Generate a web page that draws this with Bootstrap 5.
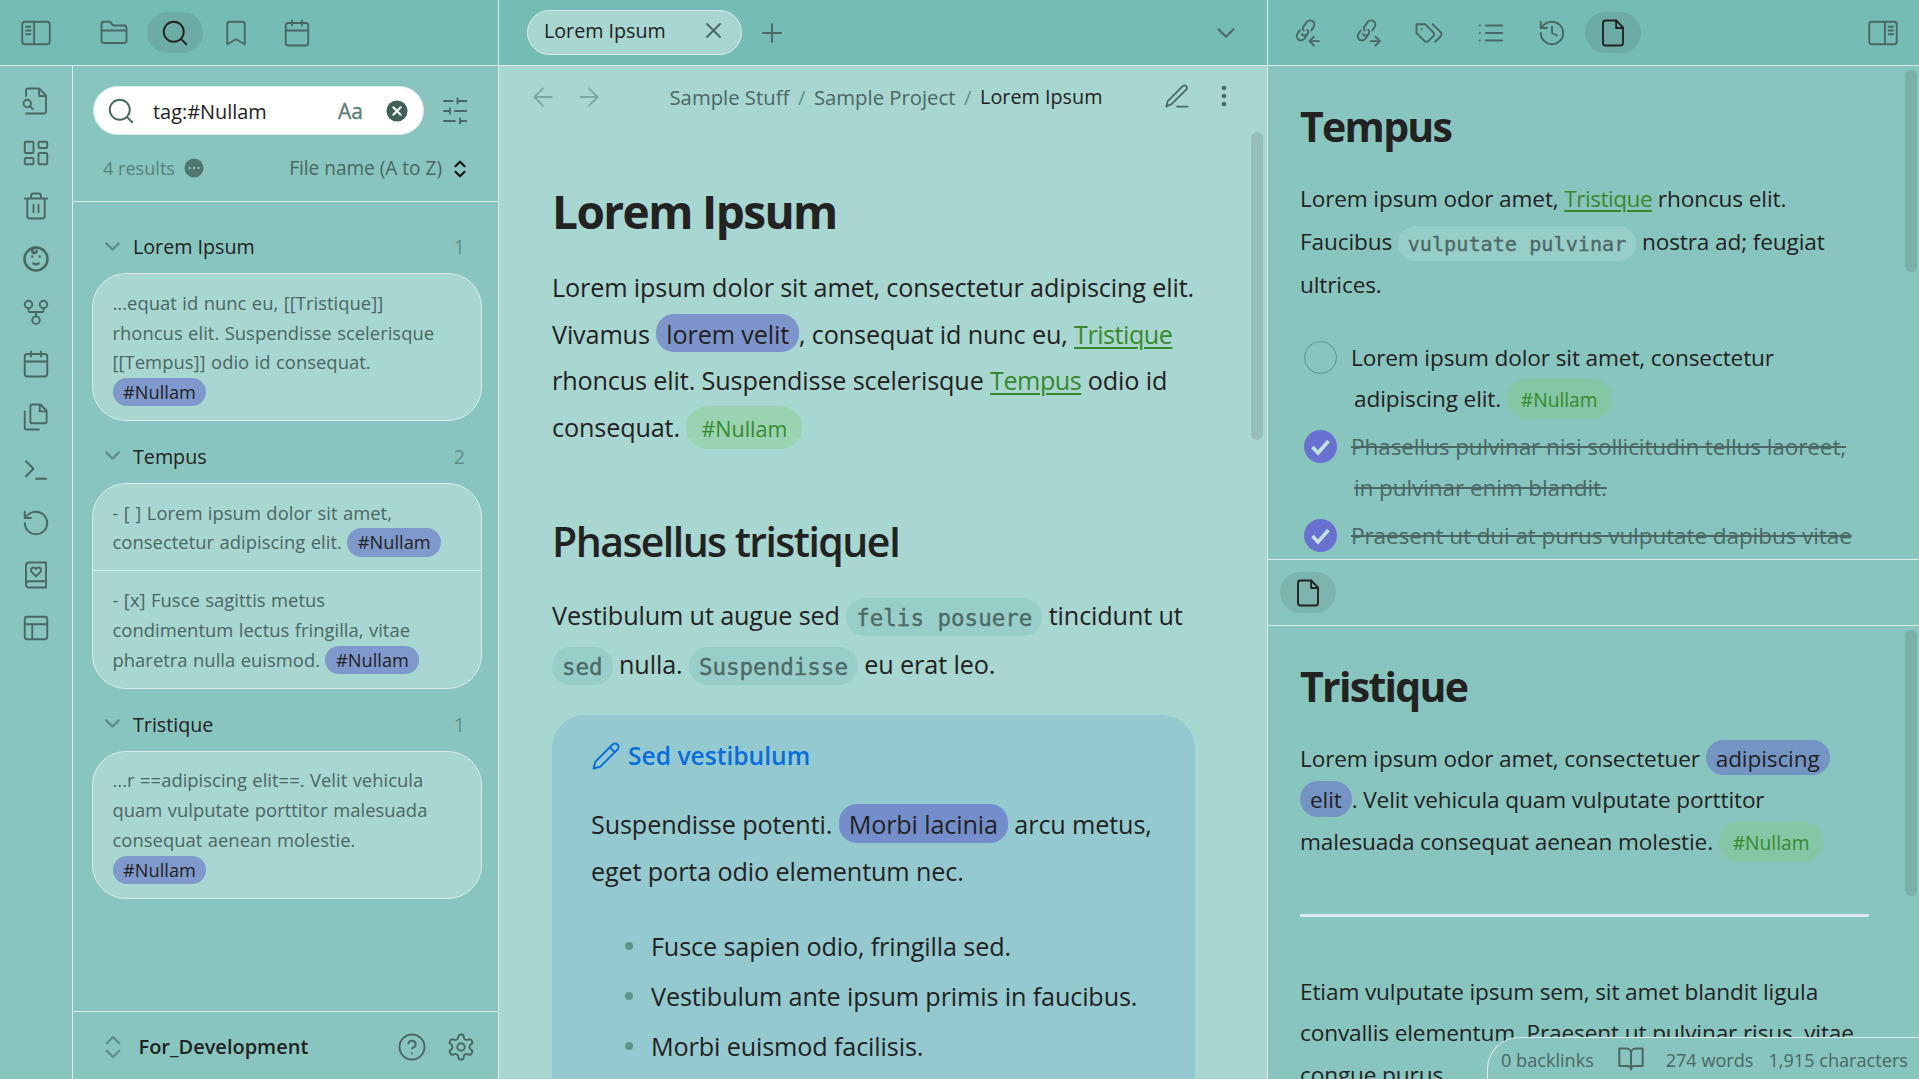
<!DOCTYPE html>
<html lang="en">
<head>
<meta charset="utf-8">
<meta name="viewport" content="width=device-width, initial-scale=1">
<title>Lorem Ipsum</title>
<link href="https://cdn.jsdelivr.net/npm/bootstrap@5.3.0/dist/css/bootstrap.min.css" rel="stylesheet">
<style>
:root{--bar:#75bcb4;--side:#88c5be;--page:#a8d6d0;--rule:#dcebe9;--ink:#222;--muted:#4a6763;--faint:#5f8f89;--link:#38892c}
body{font-family:"Open Sans","Noto Sans",sans-serif;color:var(--ink);background:var(--side);font-size:19.7px;white-space:nowrap}
svg{display:block;flex:none;fill:none;stroke:currentColor;stroke-width:1.5;stroke-linecap:round;stroke-linejoin:round;width:30px;height:30px}
.muted{color:var(--muted)}
.faint{color:var(--faint)}
.ink{color:var(--ink)}
.topbar{height:66px;background:var(--bar);border-bottom:1px solid var(--rule)}
.left-col{width:499px;border-right:1px solid var(--rule)}
.mid-col{width:769px;border-right:1px solid var(--rule);background:var(--page)}
.ribbon{width:73px;border-right:1px solid var(--rule);gap:22.75px;padding-top:19.5px}
.toggle-slot{width:86px;padding-left:21px}
.tab-btn{width:56px;height:41px;border-radius:20.5px;color:var(--muted)}
.tab-btn.on{background:rgba(70,95,90,.16);color:var(--ink)}
/* search panel */
.search-head{height:136px;border-bottom:1px solid var(--rule);padding:20px 31px 0 20px}
.search-box{width:331px;height:49px;border-radius:25px;border:1px solid #d9ebe9;background:#fff;padding-left:12px;padding-right:15px}
.res-row{padding:17px 0 0 10px;height:50px;font-size:18.1px;margin-right:-4px}
.sort{font-size:19.05px}
.group-head{height:62px;padding:18px 33px 8px 32px}
.fold{width:25px;height:25px;margin:-2px 0 0 -5px;stroke-width:2.2}
.hit-card{margin:0 16.5px 0 18.5px;background:var(--page);border:1.5px solid #dcebe9;border-radius:34px;color:var(--muted);font-size:18.4px;line-height:29.7px;letter-spacing:.03px;word-spacing:.6px;overflow:hidden}
.hit{padding:13.8px 10px 13.3px 20px}
.hit+.hit{border-top:1px solid var(--rule)}
.hit b{font-weight:400;font-size:18.2px;line-height:1;color:var(--ink);background:#8099cc;border-radius:15px;padding:2px 10.5px 2.5px}
.vault{height:68px;border-top:1px solid var(--rule);padding:2px 22px 0 31px}
.vault-name{font-size:20px;font-weight:600}
/* editor */
.doc-tab{width:215px;height:45px;border:1.5px solid var(--rule);border-radius:23px;background:var(--page);padding:0 20px 4px 16px}
.crumbs{height:65px;padding:14.5px 0 0 30.5px;font-size:20.3px}
.crumb-path{width:433px;margin-left:68px;margin-top:1px}
h1{font-weight:700;margin:0}
h2{font-size:41px;line-height:56px;font-weight:600;letter-spacing:-1.55px;margin:63px 0 22px}
p{margin:0}
.doc{width:697px;padding:50px 0 0 53px;font-size:25.2px;line-height:46.6px;letter-spacing:-.13px}
.doc h1{font-size:46px;line-height:60px;letter-spacing:-1.6px}
.doc .t1{margin-top:23px}
.roomy{line-height:49px}
a.wl{color:var(--link);letter-spacing:-.5px;text-decoration:underline;text-decoration-thickness:2px;text-underline-offset:3px}
.hl{line-height:1;background:rgba(83,83,199,.5);border-radius:18px;padding:3px 10px 1.5px}
.tagp{line-height:1;color:var(--link);background:rgba(120,205,110,.3);font-size:21.5px;letter-spacing:0;border-radius:22px;padding:8px 15px 6px}
code.ic{font-family:"DejaVu Sans Mono","Liberation Mono",monospace;font-size:22.5px;line-height:1;letter-spacing:0;color:#4d6965;-webkit-text-stroke:.35px #4d6965;background:#98cec8;border-radius:20px;padding:7px 10px 5px;vertical-align:-1px}
.callout{margin-top:25.5px;width:643px;height:400px;border-radius:33px;background:#94c9cf;padding:21.5px 0 0 39px}
.callout-title{height:40px;line-height:40px;font-size:24.6px;font-weight:600;color:#086ddd;letter-spacing:0;gap:7px}
.callout ul{list-style:none;padding:0 0 0 34px;margin:26px 0 0;line-height:50px}
.callout li::before{content:"";width:8px;height:8px;border-radius:50%;background:#5e948b;margin-right:18px;margin-top:1px}
.thumb{width:12px;border-radius:6px;background:#96bfba}
/* side notes */
.note{font-size:22.6px;line-height:41.6px;letter-spacing:-.12px;padding-left:32px}
.note h1{font-size:41px;line-height:56px;letter-spacing:-1.7px}
.note code.ic{font-size:20.2px;background:#98cec8;padding:6px 9.8px 5px}
.note .tagp{font-size:19.2px;padding:7px 14px 6px}
.note .hl{padding:3px 10px 1.5px;background:rgba(95,100,200,.5)}
.pane-a{height:494px;border-bottom:1px solid var(--rule);padding-top:32px}
.pane-tabs{height:66px;border-bottom:1px solid var(--rule);padding-left:12px}
.pane-b{padding-top:32px}
.note .thumb{background:#7ab0aa;margin-right:2px}
.task{padding-left:4px;gap:14.5px;margin-bottom:6.2px}
.task p{text-indent:-3px;padding-left:2.5px}
.task.done p{color:var(--muted);text-decoration:line-through;text-decoration-thickness:2px}
.box{width:33px;height:33px;border-radius:50%;border:1px solid #5f948d;margin-top:4px}
.done .box{background:#6871cf;border:0}
.box svg{width:33px;height:33px;stroke:#c3e3df}
.sep{height:3px;background:var(--rule);width:569px;margin:52px 0 53.5px}
.status{height:42px;width:432px;border:1px solid var(--rule);border-right:0;border-bottom:0;border-top-left-radius:32px;background:var(--side);font-size:18.14px;padding:4px 11px 0 13px;color:var(--muted)}
</style>
<script src="https://cdn.jsdelivr.net/npm/bootstrap@5.3.0/dist/js/bootstrap.bundle.min.js"></script>
</head>
<body class="vh-100 overflow-hidden d-flex">

<svg class="d-none">
  <symbol id="file" viewBox="0 0 24 24"><path d="M14.500 2H6a2 2 0 0 0-2 2v16a2 2 0 0 0 2 2h12a2 2 0 0 0 2-2V7.500z"/><path d="M14.500 2v6H20"/></symbol>
  <symbol id="cal" viewBox="0 0 24 24"><rect x="3" y="4" width="18" height="18" rx="2"/><path d="M16 2v4M8 2v4M3 10h18"/></symbol>
  <symbol id="glass" viewBox="0 0 24 24"><circle cx="11" cy="11" r="8"/><path d="m21 21-4.300-4.300"/></symbol>
  <symbol id="down" viewBox="0 0 24 24"><path d="m6 9 6 6 6-6"/></symbol>
  <symbol id="updown" viewBox="0 0 24 24"><path d="m7 15 5 5 5-5M7 9l5-5 5 5"/></symbol>
  <symbol id="tick" viewBox="0 0 33 33"><path d="m8.500 17 5.500 6 10.500-12" stroke-linecap="butt" stroke-linejoin="miter" stroke-width="3.600"/></symbol>
  <symbol id="chain" viewBox="0 0 24 24"><path d="M8 12.800c.4 1.300 2 1.700 3 .7M9.500 10c-1.200-1-.9-2.500.2-3.900l1.600-2.300c1.400-1.900 3.600-2.400 5.200-1.300s1.800 3.300.5 5.200l-1.500 2.200M12.200 9.500c1.200 1 .9 2.600-.2 4L10.400 16c-1.400 1.900-3.600 2.400-5.200 1.300s-1.800-3.300-.5-5.200l1.600-2.200"/></symbol>
</svg>

<!-- left sidebar -->
<div class="left-col d-flex flex-column flex-shrink-0">
  <header class="topbar d-flex align-items-center flex-shrink-0">
    <div class="toggle-slot muted"><svg viewBox="0 0 24 24"><rect x="1" y="3" width="22" height="18" rx="2"/><path d="M10.500 3v18M4 7h3.500M4 10h3.500M4 13h3.500"/></svg></div>
    <div class="d-flex" style="gap:5px">
      <div class="tab-btn d-flex align-items-center justify-content-center"><svg viewBox="0 0 24 24"><path d="M20 20a2 2 0 0 0 2-2V8a2 2 0 0 0-2-2h-7.900a2 2 0 0 1-1.690-.9L9.600 3.900A2 2 0 0 0 7.930 3H4a2 2 0 0 0-2 2v13a2 2 0 0 0 2 2ZM2 10h20"/></svg></div>
      <div class="tab-btn on d-flex align-items-center justify-content-center"><svg><use href="#glass"/></svg></div>
      <div class="tab-btn d-flex align-items-center justify-content-center"><svg viewBox="0 0 24 24"><path d="m19 21-7-4-7 4V5a2 2 0 0 1 2-2h10a2 2 0 0 1 2 2z"/></svg></div>
      <div class="tab-btn d-flex align-items-center justify-content-center"><svg><use href="#cal"/></svg></div>
    </div>
  </header>

  <div class="d-flex flex-grow-1">
    <nav class="ribbon muted d-flex flex-column align-items-center flex-shrink-0">
      <svg viewBox="0 0 24 24"><path d="M14.500 2H6a2 2 0 0 0-2 2v4M14.500 2 20 7.500V20a2 2 0 0 1-2 2H4M14.500 2v6H20"/><circle cx="5" cy="14" r="3"/><path d="m9.500 18.500-2.400-2.400"/></svg>
      <svg viewBox="0 0 24 24"><rect x="3" y="3" width="7" height="9" rx="1"/><rect x="14" y="3" width="7" height="5" rx="1"/><rect x="14" y="12" width="7" height="9" rx="1"/><rect x="3" y="16" width="7" height="5" rx="1"/></svg>
      <svg viewBox="0 0 24 24"><path d="M3 6h18M19 6v14a2 2 0 0 1-2 2H7a2 2 0 0 1-2-2V6M8 6V4a2 2 0 0 1 2-2h4a2 2 0 0 1 2 2v2M10 11v6M14 11v6"/></svg>
      <svg viewBox="0 0 24 24"><path stroke-width="2" d="M9 10h.01M15 10h.01M10 15.500c.5.500 1.200.7 2 .7s1.500-.2 2-.7"/><circle cx="12" cy="12" r="9.200" stroke-width="2"/><path stroke-width="2" d="M12 3c-2 0-3 1.200-3 2.300 0 1 .8 1.800 1.800 1.800s1.700-.6 1.700-1.500"/></svg>
      <svg viewBox="0 0 24 24"><circle cx="12" cy="18.500" r="3"/><circle cx="6" cy="6" r="3"/><circle cx="18" cy="6" r="3"/><path d="M18 9v1.500a1.500 1.500 0 0 1-1.500 1.500h-9A1.500 1.500 0 0 1 6 10.500V9M12 12v3.500"/></svg>
      <svg><use href="#cal"/></svg>
      <svg viewBox="0 0 24 24"><path d="M15.500 2H9a1.500 1.500 0 0 0-1.500 1.500v12A1.500 1.500 0 0 0 9 17h10a1.500 1.500 0 0 0 1.500-1.500V7zM15 2v5.500h5.500M3 7.600v12.800A1.600 1.600 0 0 0 4.600 22h9.800"/></svg>
      <svg viewBox="0 0 24 24"><path d="m4 17 6-6-6-6M12 19h8"/></svg>
      <svg viewBox="0 0 24 24"><path d="M3 12a9 9 0 1 0 9-9 9.750 9.750 0 0 0-6.740 2.740L3 8"/><path d="M3 3v5h5"/></svg>
      <svg viewBox="0 0 24 24"><path d="M4 19.500v-15A2.500 2.500 0 0 1 6.500 2H20v20H6.500a2.500 2.500 0 0 1 0-5H20"/><path d="M16 8.200c0-1.200-.9-2.200-2-2.200-.8 0-1.500.5-2 1.200C11.500 6.500 10.800 6 10 6c-1.100 0-2 1-2 2.200 0 .6.200 1.100.6 1.500L12 13l3.400-3.300c.4-.4.6-.9.6-1.500"/></svg>
      <svg viewBox="0 0 24 24"><rect x="3" y="3" width="18" height="18" rx="2"/><path d="M3 9h18M9 21V9"/></svg>
    </nav>

    <section class="flex-grow-1 d-flex flex-column">
      <div class="search-head">
        <div class="d-flex align-items-center justify-content-between">
          <div class="search-box d-flex align-items-center">
            <svg class="muted"><use href="#glass"/></svg>
            <span class="flex-grow-1" style="padding:3px 0 0 17px;font-size:19.900px">tag:#Nullam</span>
            <span style="font-size:21px;color:#5f7f7a;padding:2px 23px 0 0;-webkit-text-stroke:.4px #5f7f7a">Aa</span>
            <svg viewBox="0 0 24 24" style="width:22px;height:22px"><circle cx="12" cy="12" r="11.500" fill="#435f5a" stroke="none"/><path stroke="#fff" stroke-width="2.200" d="m8 8 8 8M16 8l-8 8"/></svg>
          </div>
          <svg class="muted" viewBox="0 0 24 24" style="margin-right:-3px"><path d="M21 4h-7M10 4H3M21 12h-9M8 12H3M21 20h-5M12 20H3M14 2v4M8 10v4M16 18v4"/></svg>
        </div>
        <div class="res-row d-flex align-items-center justify-content-between">
          <span class="d-flex align-items-center" style="gap:9px;color:#55827b">4 results
            <svg viewBox="0 0 20 20" style="width:20px;height:20px"><circle cx="10" cy="10" r="9.500" fill="#4f7771" stroke="none"/><path stroke="#a8d6d0" stroke-width="2.200" d="M5.500 10h.01M10 10h.01M14.500 10h.01"/></svg></span>
          <span class="sort muted d-flex align-items-center" style="gap:7px">File name (A to Z)
            <svg viewBox="0 0 24 24" style="width:22px;height:22px;stroke:#111;stroke-width:2.200"><use href="#updown"/></svg></span>
        </div>
      </div>

      <div class="flex-grow-1" style="padding-top:9px">
        <div class="group-head d-flex align-items-center"><svg class="fold faint"><use href="#down"/></svg><span class="flex-grow-1" style="padding-left:8px">Lorem Ipsum</span><span class="faint">1</span></div>
        <div class="hit-card"><div class="hit">...equat id nunc eu, [[Tristique]]<br>rhoncus elit. Suspendisse scelerisque<br>[[Tempus]] odio id consequat.<br><b>#Nullam</b></div></div>

        <div class="group-head d-flex align-items-center"><svg class="fold faint"><use href="#down"/></svg><span class="flex-grow-1" style="padding-left:8px">Tempus</span><span class="faint">2</span></div>
        <div class="hit-card"><div class="hit">- [ ] Lorem ipsum dolor sit amet,<br>consectetur adipiscing elit. <b>#Nullam</b></div><div class="hit">- [x] Fusce sagittis metus<br>condimentum lectus fringilla, vitae<br>pharetra nulla euismod. <b>#Nullam</b></div></div>

        <div class="group-head d-flex align-items-center"><svg class="fold faint"><use href="#down"/></svg><span class="flex-grow-1" style="padding-left:8px">Tristique</span><span class="faint">1</span></div>
        <div class="hit-card"><div class="hit">...r ==adipiscing elit==. Velit vehicula<br>quam vulputate porttitor malesuada<br>consequat aenean molestie.<br><b>#Nullam</b></div></div>
      </div>

      <footer class="vault d-flex align-items-center">
        <svg class="faint" style="margin-left:-6px;stroke-width:1.800"><use href="#updown"/></svg>
        <span class="vault-name flex-grow-1" style="padding-left:10.500px">For_Development</span>
        <svg class="muted" viewBox="0 0 24 24" style="margin-right:19px"><circle cx="12" cy="12" r="10"/><path d="M9.090 9a3 3 0 0 1 5.830 1c0 2-3 3-3 3M12 17h.01"/></svg>
        <svg class="muted" viewBox="0 0 24 24"><circle cx="12" cy="12" r="3"/><path d="M12.220 2h-.44a2 2 0 0 0-2 2v.18a2 2 0 0 1-1 1.730l-.43.250a2 2 0 0 1-2 0l-.15-.08a2 2 0 0 0-2.730.73l-.22.380a2 2 0 0 0 .73 2.730l.15.100a2 2 0 0 1 1 1.720v.510a2 2 0 0 1-1 1.740l-.15.090a2 2 0 0 0-.73 2.730l.22.380a2 2 0 0 0 2.730.730l.15-.080a2 2 0 0 1 2 0l.43.250a2 2 0 0 1 1 1.730V20a2 2 0 0 0 2 2h.44a2 2 0 0 0 2-2v-.18a2 2 0 0 1 1-1.730l.43-.25a2 2 0 0 1 2 0l.15.080a2 2 0 0 0 2.730-.73l.22-.39a2 2 0 0 0-.73-2.730l-.15-.08a2 2 0 0 1-1-1.740v-.5a2 2 0 0 1 1-1.740l.15-.09a2 2 0 0 0 .73-2.730l-.22-.38a2 2 0 0 0-2.730-.73l-.15.080a2 2 0 0 1-2 0l-.43-.25a2 2 0 0 1-1-1.730V4a2 2 0 0 0-2-2z"/></svg>
      </footer>
    </section>
  </div>
</div>

<!-- editor -->
<main class="mid-col d-flex flex-column flex-shrink-0">
  <header class="topbar d-flex align-items-center flex-shrink-0" style="padding:0 26px 0 28px">
    <div class="doc-tab d-flex align-items-center justify-content-between"><span>Lorem Ipsum</span><svg class="muted" viewBox="0 0 15 15" style="width:15px;height:15px"><path stroke-width="1.900" d="m1 1 13 13M14 1 1 14"/></svg></div>
    <svg class="muted me-auto" viewBox="0 0 20 20" style="width:20px;height:20px;margin-left:20px"><path stroke-width="1.800" d="M10 .9v18.200M.9 10h18.200"/></svg>
    <svg class="muted"><use href="#down"/></svg>
  </header>
  <div class="crumbs d-flex align-items-start flex-shrink-0">
    <svg viewBox="0 0 24 24" style="color:#7aa8a2;width:26px;height:26px;margin-top:3px"><path stroke-width="1.700" d="m12 20-8-8 8-8M20 12H4"/></svg>
    <svg viewBox="0 0 24 24" style="color:#7aa8a2;width:26px;height:26px;margin:3px 0 0 20px"><path stroke-width="1.700" d="m12 20 8-8-8-8M4 12h16"/></svg>
    <div class="crumb-path muted d-flex justify-content-between"><span>Sample Stuff</span><span class="faint">/</span><span>Sample Project</span><span class="faint">/</span><span class="ink" style="font-size:19.800px">Lorem Ipsum</span></div>
    <svg class="muted" viewBox="0 0 24 24" style="margin:1px 0 0 60px;width:28px;height:28px"><path d="M12 21h9M17.100 3.300a2.150 2.150 0 0 1 3 3L7.300 19 2.800 21l1.300-4.700z"/></svg>
    <svg viewBox="0 0 8 24" style="width:8px;height:24px;margin:3px 0 0 29px;stroke:none;fill:#4a6763"><circle cx="4" cy="4" r="2.300"/><circle cx="4" cy="12" r="2.300"/><circle cx="4" cy="20" r="2.300"/></svg>
  </div>
  <div class="d-flex flex-grow-1 overflow-hidden">
    <article class="doc flex-shrink-0" style="margin-right:55px">
      <h1>Lorem Ipsum</h1>
      <p class="t1">Lorem ipsum dolor sit amet, consectetur adipiscing elit.<br>Vivamus <span class="hl">lorem velit</span>, consequat id nunc eu, <a class="wl">Tristique</a><br>rhoncus elit. Suspendisse scelerisque <a class="wl">Tempus</a> odio id<br>consequat. <span class="tagp">#Nullam</span></p>
      <h2>Phasellus tristiqueI</h2>
      <p class="roomy">Vestibulum ut augue sed <code class="ic">felis posuere</code> tincidunt ut<br><code class="ic">sed</code> nulla. <code class="ic">Suspendisse</code> eu erat leo.</p>
      <div class="callout">
        <div class="callout-title d-flex align-items-center"><svg viewBox="0 0 24 24"><path d="M17 3a2.850 2.830 0 1 1 4 4L7.500 20.500 2 22l1.500-5.500ZM15 5l4 4"/></svg><span>Sed vestibulum</span></div>
        <p style="margin-top:25px">Suspendisse potenti. <span class="hl">Morbi lacinia</span> arcu metus,<br>eget porta odio elementum nec.</p>
        <ul><li class="d-flex align-items-center">Fusce sapien odio, fringilla sed.</li><li class="d-flex align-items-center">Vestibulum ante ipsum primis in faucibus.</li><li class="d-flex align-items-center">Morbi euismod facilisis.</li></ul>
      </div>
    </article>
    <div class="thumb flex-shrink-0" style="height:308px;margin-top:1px"></div>
  </div>
</main>

<!-- right sidebar -->
<aside class="flex-grow-1 d-flex flex-column overflow-hidden position-relative">
  <header class="topbar d-flex align-items-center flex-shrink-0" style="padding:0 21px 0 11px">
    <div class="d-flex me-auto" style="gap:5.200px">
      <div class="tab-btn d-flex align-items-center justify-content-center"><svg viewBox="0 0 24 24"><use href="#chain"/><path d="M21.500 18.500h-7M17.500 15l-3.500 3.500 3.500 3.500"/></svg></div>
      <div class="tab-btn d-flex align-items-center justify-content-center"><svg viewBox="0 0 24 24"><use href="#chain"/><path d="M14 18.500h7M18 15l3.500 3.500L18 22"/></svg></div>
      <div class="tab-btn d-flex align-items-center justify-content-center"><svg viewBox="0 0 24 24"><path d="M9 5H2v7l6.290 6.290a2.400 2.400 0 0 0 3.420 0l3.580-3.580a2.400 2.400 0 0 0 0-3.420ZM6 9.010V9M15 5l6.300 6.300a2.400 2.400 0 0 1 0 3.400L17 19"/></svg></div>
      <div class="tab-btn d-flex align-items-center justify-content-center"><svg viewBox="0 0 24 24"><path d="M8 6h13M8 12h13M8 18h13M3 6h.01M3 12h.01M3 18h.01"/></svg></div>
      <div class="tab-btn d-flex align-items-center justify-content-center"><svg viewBox="0 0 24 24"><path d="M3 12a9 9 0 1 0 9-9 9.750 9.750 0 0 0-6.740 2.740L3 8"/><path d="M3 3v5h5M12 7v5l4 2"/></svg></div>
      <div class="tab-btn on d-flex align-items-center justify-content-center"><svg><use href="#file"/></svg></div>
    </div>
    <svg class="muted" viewBox="0 0 24 24"><rect x="1" y="3" width="22" height="18" rx="2"/><path d="M13.500 3v18M16.500 7H20M16.500 10H20M16.500 13H20"/></svg>
  </header>

  <section class="note pane-a d-flex justify-content-between overflow-hidden flex-shrink-0">
    <div>
      <h1>Tempus</h1>
      <p style="margin-top:22.500px;line-height:43px">Lorem ipsum odor amet, <a class="wl">Tristique</a> rhoncus elit.<br>Faucibus <code class="ic">vulputate pulvinar</code> nostra ad; feugiat<br>ultrices.</p>
      <div class="d-flex task" style="margin-top:31px"><div class="box"></div><p>Lorem ipsum dolor sit amet, consectetur<br>adipiscing elit. <span class="tagp">#Nullam</span></p></div>
      <div class="d-flex task done"><div class="box"><svg><use href="#tick"/></svg></div><p>Phasellus pulvinar nisi sollicitudin tellus laoreet,<br>in pulvinar enim blandit.</p></div>
      <div class="d-flex task done"><div class="box"><svg><use href="#tick"/></svg></div><p>Praesent ut dui at purus vulputate dapibus vitae</p></div>
    </div>
    <div class="thumb flex-shrink-0" style="height:202px;margin-top:-28px"></div>
  </section>

  <div class="pane-tabs d-flex align-items-center flex-shrink-0">
    <div class="tab-btn on d-flex align-items-center justify-content-center"><svg><use href="#file"/></svg></div>
  </div>

  <section class="note pane-b d-flex justify-content-between overflow-hidden flex-grow-1">
    <div>
      <h1>Tristique</h1>
      <p style="margin-top:23.500px">Lorem ipsum odor amet, consectetuer <span class="hl">adipiscing</span><br><span class="hl">elit</span>. Velit vehicula quam vulputate porttitor<br>malesuada consequat aenean molestie. <span class="tagp">#Nullam</span></p>
      <div class="sep"></div>
      <p>Etiam vulputate ipsum sem, sit amet blandit ligula<br>convallis elementum. Praesent ut pulvinar risus, vitae<br>congue purus.</p>
    </div>
    <div class="thumb flex-shrink-0" style="height:266px;margin-top:-28px"></div>
  </section>

  <div class="status position-absolute bottom-0 end-0 d-flex align-items-center justify-content-between">
    <span>0 backlinks</span>
    <svg viewBox="0 0 24 24" style="width:28px;height:28px;margin:-3px 0 0 8px"><path stroke-width="1.700" d="M2 3h6a4 4 0 0 1 4 4v14a3 3 0 0 0-3-3H2zM22 3h-6a4 4 0 0 0-4 4v14a3 3 0 0 1 3-3h7z"/></svg>
    <span style="margin-left:6px">274 words</span><span>1,915 characters</span>
  </div>
</aside>
</body>
</html>
